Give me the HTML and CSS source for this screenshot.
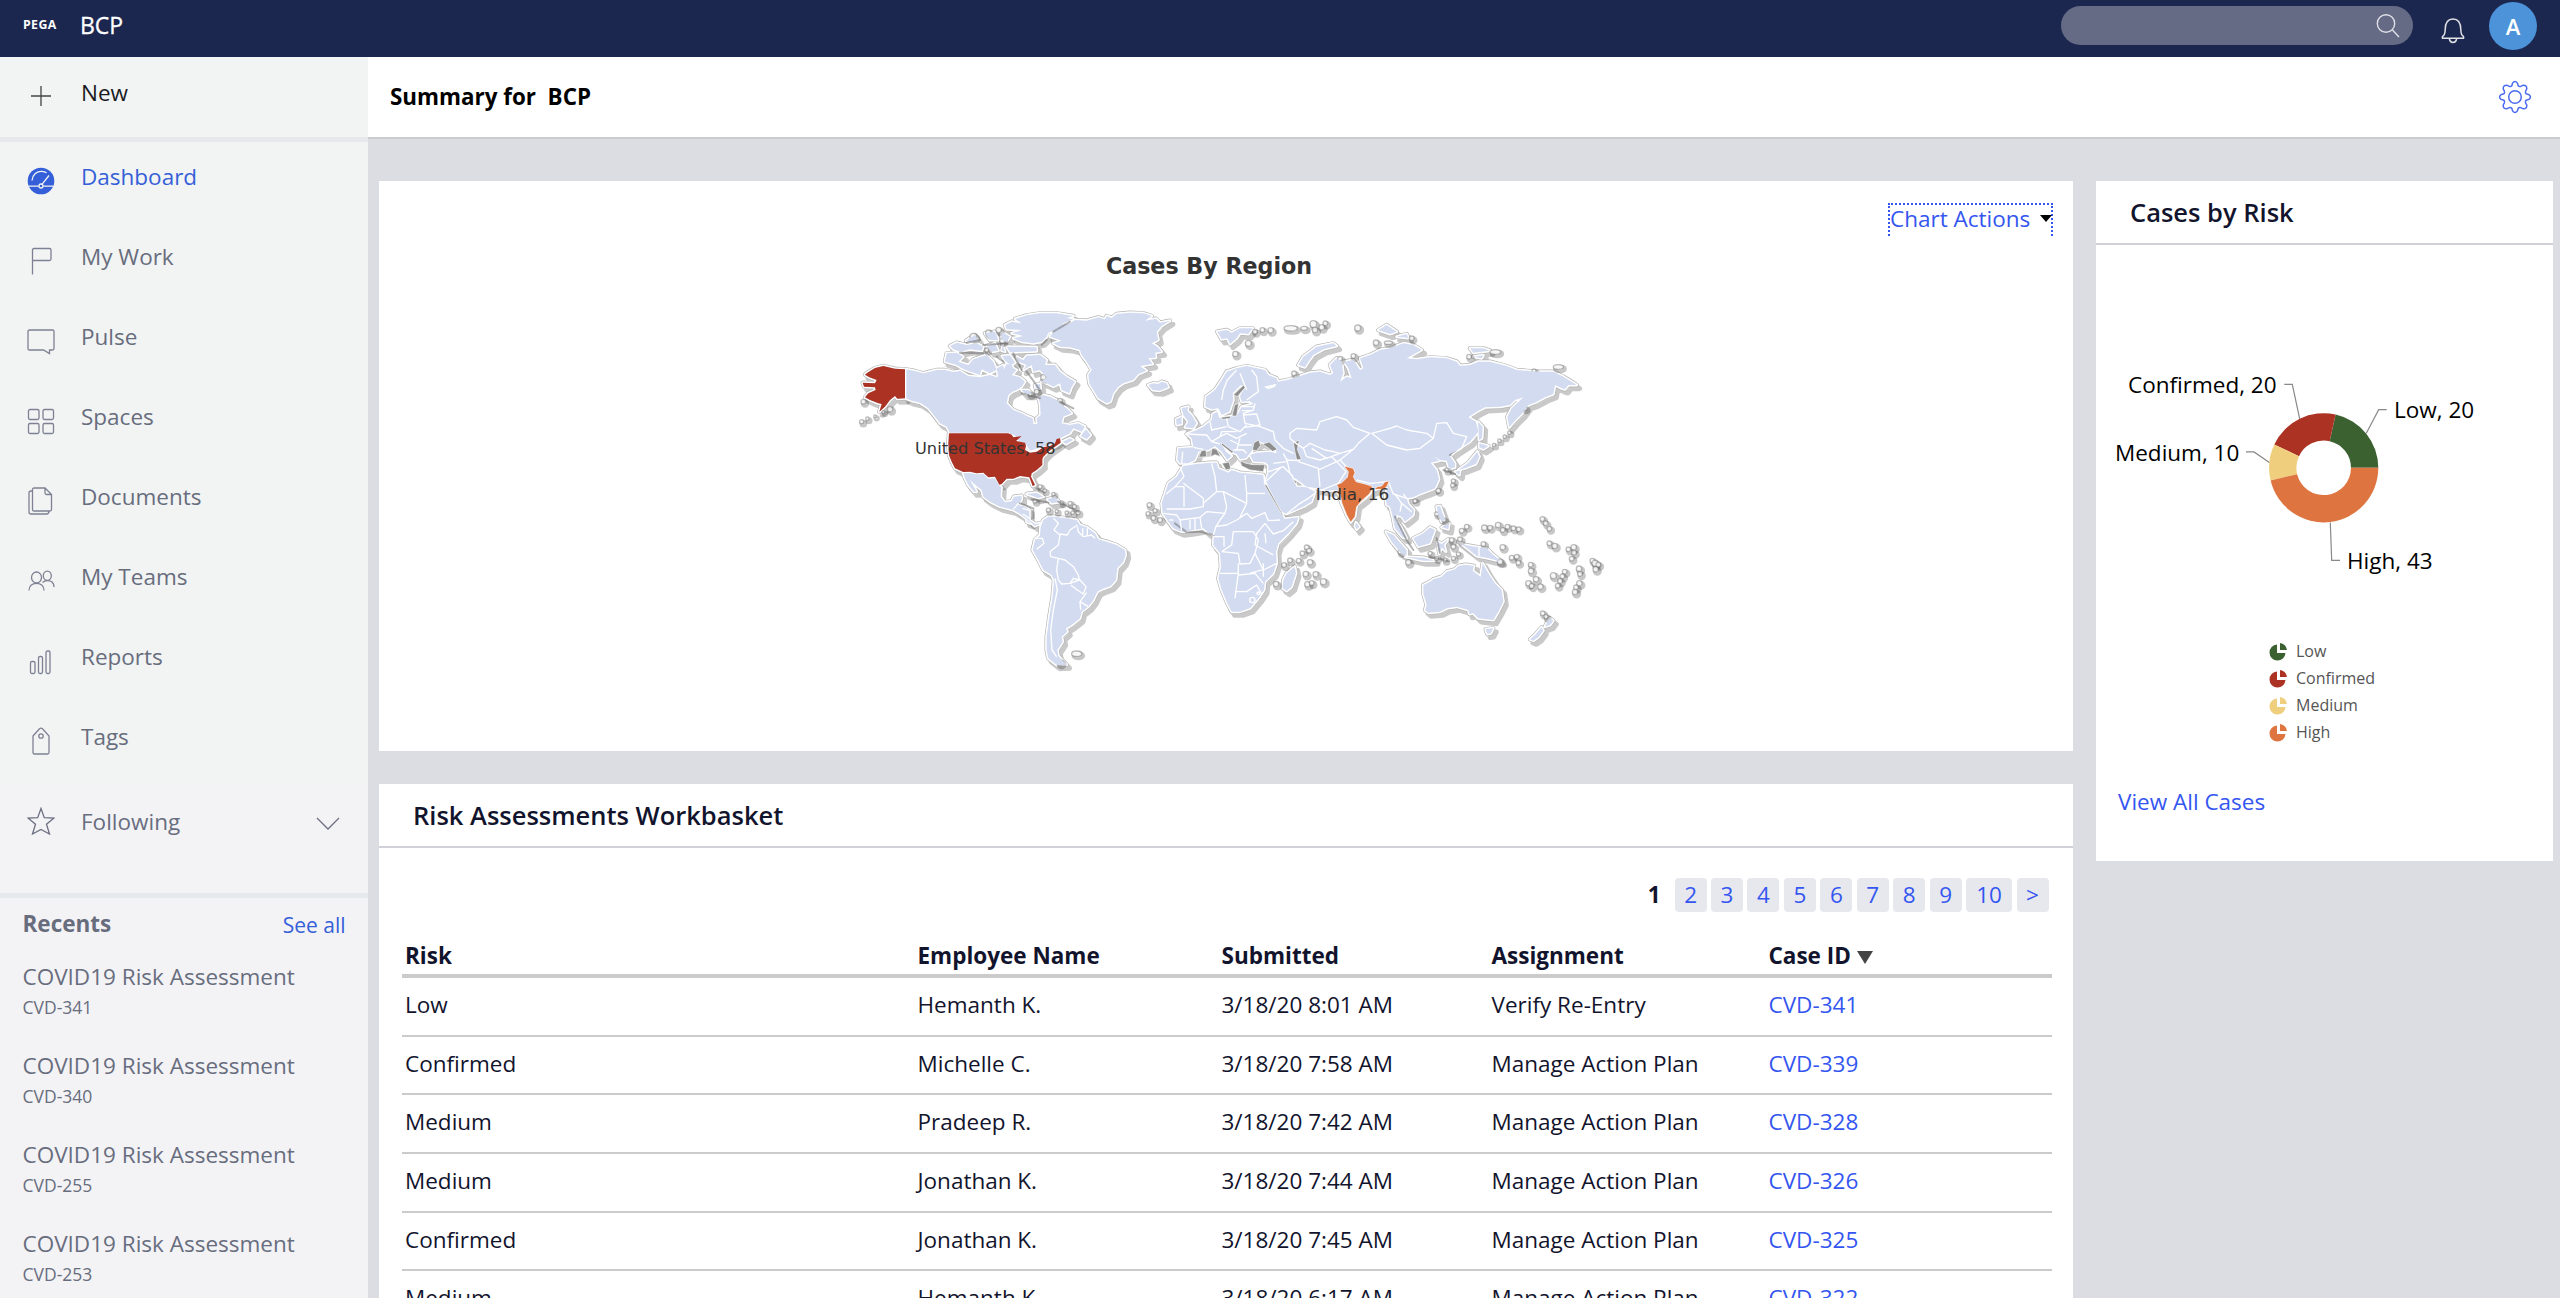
FILE: index.html
```html
<!DOCTYPE html>
<html lang="en">
<head>
<meta charset="utf-8">
<title>BCP</title>
<link rel="stylesheet" href="styles.css">
</head>
<body>
<header class="topbar">
  <span class="logo">PEGA</span>
  <span class="app-name">BCP</span>
  <div class="search">
    <svg width="26" height="28" viewBox="0 0 26 28"><circle cx="10" cy="10.5" r="8.7"/><path d="M16.5 17L23 24"/></svg>
  </div>
  <svg class="bell" width="24" height="28" viewBox="0 0 24 28"><path d="M1.500 21.200Q0.900 19.500 2.500 18.600Q4 17.500 4.200 12.500C4.300 5.500 6.500 2 12 2S19.700 5.500 19.800 12.500Q20 17.500 21.500 18.600Q23.100 19.500 22.500 21.200ZM8.300 21.500Q9 25.400 12 25.400T15.700 21.500"/></svg>
  <span class="avatar">A</span>
</header>
<div class="shell">
  <aside class="sidebar">
    <a class="nav-row new"><svg viewBox="0 0 28 28"><path d="M14 4v20M4 14h20"/></svg>New</a>
    <nav class="nav">
      <a class="nav-row active"><svg viewBox="0 0 28 28"><circle class="disc" cx="14" cy="14" r="13.300"/><path class="lite" d="M5 13.500C5.500 7.500 10 4 15 4.300Q17.500 4.500 19.500 5.800M22 8.500L14.800 17.600M1.500 19.200h10.300M16.200 19.200h10.300"/><circle class="lite" cx="14" cy="19" r="2"/></svg>Dashboard</a>
      <a class="nav-row"><svg viewBox="0 0 28 28"><path d="M5.500 27.500V3Q5.500 1.500 7 1.500H22.500Q24 1.500 24 3V12Q24 13.500 22.500 13.500H5.500"/></svg>My Work</a>
      <a class="nav-row"><svg viewBox="0 0 28 28"><path d="M2.500 3H25.500Q27 3 27 4.500V21.500Q27 23 25.500 23H22.500V26.500L16.500 23H2.500Q1 23 1 21.500V4.500Q1 3 2.500 3Z"/></svg>Pulse</a>
      <a class="nav-row"><svg viewBox="0 0 28 28"><rect x="1.500" y="2.500" width="10.500" height="10" rx="1.500"/><rect x="16" y="2.500" width="10.500" height="10" rx="1.500"/><rect x="1.500" y="16.500" width="10.500" height="10" rx="1.500"/><rect x="16" y="16.500" width="10.500" height="10" rx="1.500"/></svg>Spaces</a>
      <a class="nav-row"><svg viewBox="0 0 28 28"><path d="M5.500 2.500Q5.500 1 7 1H18L24.500 7.500V22.500Q24.500 24 23 24H7Q5.500 24 5.500 22.500ZM18 1V6Q18 7.500 19.500 7.500H24.500M5.500 4H4Q2 4 2 6V25Q2 27 4 27H19.500Q22 27 22 24"/></svg>Documents</a>
      <a class="nav-row"><svg viewBox="0 0 28 28"><ellipse cx="9.500" cy="10.500" rx="5" ry="5.500"/><path d="M2 23.500C2 19 5 16.300 9.500 16.300S17 19 17 23.500"/><ellipse cx="20.300" cy="8.800" rx="4" ry="4.600"/><path d="M15.500 15.500Q17.500 13.600 20.300 13.600C24.500 13.600 27 16 27 20"/></svg>My Teams</a>
      <a class="nav-row"><svg viewBox="0 0 28 28"><rect x="3.500" y="14.500" width="4.500" height="12" rx="1.500"/><rect x="11.500" y="9.500" width="4" height="17" rx="1.500"/><rect x="19" y="4" width="4" height="22.500" rx="1.500"/></svg>Reports</a>
      <a class="nav-row"><svg viewBox="0 0 28 28"><path d="M6 9L12.500 1.800Q14 0.500 15.500 1.800L22 9V25.500Q22 27 20.500 27H7.500Q6 27 6 25.500Z"/><circle cx="14" cy="9" r="2.200"/></svg>Tags</a>
    </nav>
    <a class="nav-row following"><svg viewBox="0 0 28 28"><path d="M14 1.500L17.300 10.700L27 11L19.500 17.200L22.500 27L14 22.500L5.500 27L8.500 17.200L1 11L10.700 10.700Z"/></svg>Following<svg class="chev" viewBox="0 0 28 28"><path d="M3 9L14 20L25 9"/></svg></a>
    <section class="recents">
      <div class="recents-head"><b>Recents</b><a>See all</a></div>
      <div class="recent"><p>COVID19 Risk Assessment</p><small>CVD-341</small></div>
      <div class="recent"><p>COVID19 Risk Assessment</p><small>CVD-340</small></div>
      <div class="recent"><p>COVID19 Risk Assessment</p><small>CVD-255</small></div>
      <div class="recent"><p>COVID19 Risk Assessment</p><small>CVD-253</small></div>
    </section>
  </aside>
  <main class="main">
    <div class="page-head"><h1>Summary for&nbsp; BCP</h1>
      <svg class="gear" width="34" height="34" viewBox="-17 -17 34 34"><path d="M-2.400 -13.900Q0 -17 2.400 -13.900L3.200 -11.200Q4.200 -10 5.800 -10.600L8.200 -11.800Q11.900 -11.900 11.800 -8.200L10.600 -5.800Q10 -4.200 11.200 -3.200L13.900 -2.400Q17 0 13.900 2.400L11.200 3.200Q10 4.200 10.600 5.800L11.800 8.200Q11.900 11.900 8.200 11.800L5.800 10.600Q4.200 10 3.200 11.200L2.400 13.900Q0 17 -2.400 13.900L-3.200 11.200Q-4.200 10 -5.800 10.600L-8.200 11.800Q-11.900 11.900 -11.800 8.200L-10.600 5.800Q-10 4.200 -11.200 3.200L-13.900 2.400Q-17 0 -13.900 -2.400L-11.200 -3.200Q-10 -4.200 -10.600 -5.800L-11.800 -8.200Q-11.900 -11.900 -8.200 -11.800L-5.800 -10.600Q-4.200 -10 -3.200 -11.200Z"/><circle r="6.300"/></svg>
    </div>
    <div class="content">
      <div class="col-main">
        <section class="card map-card">
          <div class="actions"><a>Chart Actions</a><svg width="12" height="8" viewBox="0 0 12 8"><path d="M0 0H12L6 7Z"/></svg></div>
          <h2 class="map-title">Cases By Region</h2>
          <svg class="map" width="780" height="390" viewBox="0 0 2340 1170">
            <defs>
              <g id="land">
                <path id="canada" d="M197 238L225 243L250 250L270 245L290 240L315 240L340 246L360 243L385 258L420 262L450 255L470 262L485 250L490 240L500 222L515 225L520 235L530 240L515 255L540 262L555 275L545 290L530 300L518 305L505 315L500 340L520 360L545 370L560 378L578 385L580 402L592 402L590 385L602 375L600 340L595 325L610 315L630 320L650 330L665 345L680 355L695 370L670 380L665 400L690 405L715 400L735 410L725 425L700 415L690 430L660 445L650 458L630 465L610 470L570 482L560 465L540 458L530 440L515 432L330 430L320 410L300 400L285 380L265 355L240 338L215 332L197 325Z"/>
                <path id="alaska" d="M195 238L165 236L130 228L105 234L82 248L75 254L88 262L110 270L105 280L68 278L72 290L105 292L107 300L85 310L75 322L90 330L115 340L125 342L118 365L135 350L150 330L165 318L172 326L195 325Z"/>
                <path id="usa" d="M327 430L505 430L515 434L520 442L545 438L528 453L555 458L558 468L555 480L570 488L590 485L610 472L630 468L645 460L650 447L660 445L662 458L645 470L625 485L610 500L607 507L607 525L590 540L575 550L573 560L585 585L578 588L568 562L540 558L520 566L500 566L485 582L478 584L465 560L445 562L430 548L410 550L390 545L370 546L345 535L335 515L327 495L325 460Z"/>
                <path d="M370 550L390 549L410 553L430 552L445 566L465 565L478 587L484 592L482 620L495 637L515 634L522 620L545 617L545 628L535 645L555 650L568 660L568 690L585 702L603 700L585 708L570 695L545 675L520 660L480 650L450 635L430 620L425 600L400 580L388 567L410 605L402 605L385 585L375 565Z"/>
                <path d="M610 690L625 680L640 680L680 685L710 690L720 705L740 712L765 730L775 748L800 755L830 765L855 780L857 795L850 815L832 835L828 870L812 888L785 898L772 905L760 930L745 950L725 965L720 985L695 1005L678 1015L682 1025L665 1040L668 1055L652 1080L655 1098L668 1112L680 1124L650 1125L625 1105L620 1080L620 1040L628 980L638 920L642 870L635 855L610 840L595 810L578 780L585 750L600 735L602 710Z"/>
                <path d="M640 125L660 105L690 100L705 90L740 92L775 82L795 88L800 78L815 84L830 72L870 68L910 70L935 78L915 92L948 86L960 98L990 92L965 108L950 125L955 150L935 160L952 170L965 185L945 188L948 203L925 205L938 222L900 228L920 242L895 252L880 270L850 280L835 290L820 310L812 335L800 340L775 325L760 300L748 280L745 255L755 240L740 215L725 195L720 180L690 172L660 170L640 160L665 152L630 140Z"/>
                <path d="M495 105L515 95L545 100L525 87L560 76L600 70L650 70L700 78L680 84L700 88L670 100L650 120L625 128L620 140L605 155L580 160L545 155L520 145L550 138L515 130L545 120L500 118Z"/>
                <path d="M320 190L350 188L370 200L355 215L385 225L400 208L440 195L460 215L470 240L450 250L425 238L420 255L390 245L365 235L350 225L315 215Z"/>
                <path d="M330 168L350 158L380 165L410 160L430 170L425 182L390 178L360 185L340 178ZM378 152L405 135L415 150L395 158ZM435 130L465 125L475 150L450 150ZM440 168L465 160L475 182L455 185ZM485 125L510 140L500 155L484 150ZM500 170L590 172L590 184L510 187ZM488 165L495 185L485 182ZM486 198L510 196L525 218L512 226L495 212ZM470 235L490 225L492 252L474 258Z"/>
                <path d="M530 200L550 210L560 197L600 195L620 210L615 225L645 225L660 245L680 260L705 275L695 290L688 310L665 300L660 280L640 290L620 280L605 275L620 262L600 240L580 245L575 225L550 240L560 225L535 215ZM545 300L565 300L575 312L555 312ZM585 285L600 282L602 295L588 298ZM925 285L940 280L955 282L965 275L980 280L985 292L960 302L938 300ZM722 438L738 418L752 435L740 448ZM668 455L690 445L700 450L678 462Z"/>
                <path d="M560 612L590 608L610 620L595 624ZM622 628L645 622L658 636L635 640ZM525 652L545 658L560 675L545 665ZM560 690L572 700L560 696Z"/>
                <g transform="translate(900 0)">
                  <path d="M130 528L170 522L210 518L230 518L235 535L265 548L275 540L300 548L350 553L370 555L372 580L390 610L405 640L425 668L433 687L475 682L470 700L445 730L415 760L408 785L410 820L400 850L375 875L372 900L355 925L330 955L300 965L275 965L262 940L245 900L235 865L243 830L240 790L220 765L222 735L205 728L190 715L150 722L125 725L100 715L85 695L68 670L65 640L75 610L85 580L110 560Z"/>
                  <path d="M196 350L198 320L225 300L245 270L260 245L290 235L320 228L350 235L375 240L385 255L410 265L415 280L395 285L372 290L385 298L405 290L412 275L430 272L450 268L480 258L510 248L540 245L570 255L580 250L570 225L590 205L605 215L610 250L600 275L620 260L635 265L625 235L612 215L640 210L660 240L670 235L660 205L690 195L720 180L750 175L790 160L820 165L845 180L800 205L830 208L870 202L920 205L950 215L960 228L990 225L1015 215L1050 215L1100 228L1130 240L1190 245L1240 245L1270 260L1295 275L1310 285L1285 285L1275 298L1265 295L1245 285L1240 312L1215 322L1185 338L1165 345L1145 372L1122 395L1108 412L1102 380L1115 355L1150 322L1125 330L1110 345L1080 350L1035 352L1010 365L985 382L1008 395L1015 425L990 455L955 478L940 488L930 498L945 520L945 532L928 538L920 512L900 510L880 498L898 512L872 518L890 540L897 568L885 595L860 605L840 612L820 622L800 625L805 642L822 660L820 675L795 695L785 680L770 675L768 690L782 710L800 745L788 742L765 715L758 680L750 650L740 645L735 615L745 590L720 595L695 602L690 610L675 625L650 645L645 680L632 697L620 675L605 640L595 610L590 600L560 602L530 595L500 590L470 568L455 560L470 590L500 592L525 605L515 635L490 650L440 672L425 665L405 630L385 590L378 570L385 550L385 525L375 517L340 515L330 495L350 488L390 485L410 490L405 470L360 455L342 475L330 490L318 505L300 508L290 492L270 485L245 462L258 485L275 498L262 510L245 485L225 468L205 480L175 485L165 510L145 520L120 520L112 510L115 475L160 472L155 445L140 432L170 420L190 410L215 390L218 372L232 365L238 385L275 378L295 370L305 350L340 342L330 334L305 335L300 318L315 290L302 286L278 310L280 330L268 365L245 375L235 355L215 358Z"/>
                  <path d="M125 355L145 350L142 362L155 375L170 400L160 415L135 412L145 395L130 375ZM108 388L125 380L125 402L110 405ZM475 225L490 200L530 170L580 160L590 168L550 178L520 195L505 215L495 232ZM232 125L260 120L275 128L300 115L338 115L325 132L300 130L290 145L270 162L262 145L245 148ZM715 120L740 105L770 125L750 132ZM770 140L800 132L805 144ZM990 175L1030 175L1050 182L1000 188ZM1000 200L1030 196L1025 205Z"/>
                  <path d="M1012 485L1018 500L1008 522L975 535L955 540L985 518ZM1018 460L1045 468L1030 478L1018 472ZM1014 395L1028 410L1026 445L1017 450ZM945 545L960 542L958 555ZM890 650L900 648L915 690L905 695L895 675ZM905 712L928 700L925 718ZM738 725L760 735L800 780L800 795L785 792L755 755ZM795 800L850 803L885 812L850 812ZM820 745L850 730L870 712L885 720L870 760L835 770ZM893 755L905 762L925 748L912 765L918 785L905 772L898 792ZM955 755L975 765L1005 770L1040 775L1060 795L1085 815L1045 805L1010 798L985 778ZM648 697L658 710L650 718L645 708Z"/>
                  <path d="M850 885L870 875L880 868L905 860L920 845L945 838L955 828L978 824L1002 828L998 842L1022 860L1028 820L1045 850L1065 880L1085 900L1090 935L1075 965L1060 990L1038 988L1015 985L1000 970L988 972L985 960L950 950L920 955L900 965L865 968L855 960L860 945L850 910ZM1037 1018L1060 1015L1052 1030L1042 1032ZM464 830L468 850L455 890L440 903L428 895L430 870L440 850Z"/>
                </g>
                <path d="M2122 995L2130 985L2140 992L2130 1005L2115 1010ZM2070 1048L2085 1035L2105 1012L2110 1022L2095 1042L2080 1052Z"/>
              </g>
              <g id="islets">
                <circle cx="65" cy="395" r="6"/><circle cx="82" cy="386" r="5"/><circle cx="105" cy="379" r="4"/><circle cx="130" cy="366" r="4"/><circle cx="150" cy="358" r="8"/><circle cx="70" cy="335" r="7"/>
                <circle cx="928" cy="645" r="7"/><circle cx="945" cy="662" r="6"/><circle cx="924" cy="671" r="6"/><circle cx="940" cy="684" r="7"/><circle cx="960" cy="690" r="7"/>
                <circle cx="600" cy="590" r="6"/><circle cx="614" cy="602" r="5"/><circle cx="585" cy="633" r="6"/><circle cx="665" cy="638" r="5"/><circle cx="690" cy="640" r="6"/><circle cx="703" cy="650" r="6"/><circle cx="714" cy="668" r="6"/><circle cx="625" cy="660" r="6"/><circle cx="650" cy="664" r="5"/><circle cx="680" cy="668" r="5"/><circle cx="698" cy="668" r="5"/><circle cx="640" cy="612" r="5"/>
                <circle cx="400" cy="140" r="10"/><circle cx="445" cy="128" r="8"/><circle cx="476" cy="120" r="8"/><circle cx="487" cy="152" r="8"/><circle cx="440" cy="180" r="6"/><circle cx="610" cy="262" r="8"/><circle cx="590" cy="305" r="7"/><circle cx="570" cy="312" r="6"/><circle cx="660" cy="332" r="7"/><ellipse cx="710" cy="1091" rx="15" ry="8"/><circle cx="660" cy="1118" r="9"/>
                <g transform="translate(900 0)">
                  <circle cx="286" cy="192" r="8"/><circle cx="325" cy="160" r="9"/><circle cx="345" cy="125" r="7"/><circle cx="367" cy="120" r="7"/><circle cx="392" cy="121" r="8"/>
                  <ellipse cx="452" cy="115" rx="20" ry="8"/><ellipse cx="492" cy="115" rx="10" ry="6"/><circle cx="520" cy="102" r="10"/><circle cx="525" cy="120" r="8"/><circle cx="545" cy="112" r="8"/><circle cx="556" cy="100" r="7"/><circle cx="653" cy="114" r="9"/><circle cx="708" cy="158" r="8"/><ellipse cx="745" cy="158" rx="12" ry="5"/><circle cx="815" cy="145" r="7"/><ellipse cx="1066" cy="186" rx="16" ry="7"/><circle cx="987" cy="200" r="7"/><ellipse cx="1255" cy="231" rx="15" ry="7"/>
                  <circle cx="600" cy="206" r="7"/><circle cx="640" cy="198" r="7"/><circle cx="462" cy="250" r="7"/>
                  <circle cx="432" cy="825" r="7"/><circle cx="450" cy="811" r="7"/><circle cx="476" cy="812" r="7"/><circle cx="487" cy="790" r="7"/><circle cx="500" cy="772" r="7"/><circle cx="507" cy="782" r="7"/><circle cx="510" cy="817" r="8"/><circle cx="497" cy="852" r="8"/><circle cx="527" cy="853" r="8"/><circle cx="502" cy="883" r="8"/><circle cx="515" cy="879" r="7"/><circle cx="550" cy="875" r="9"/><circle cx="408" cy="882" r="8"/>
                  <circle cx="895" cy="602" r="7"/><circle cx="825" cy="633" r="6"/><circle cx="805" cy="817" r="8"/><circle cx="780" cy="786" r="6"/><circle cx="940" cy="573" r="6"/><circle cx="938" cy="586" r="6"/><circle cx="920" cy="540" r="6"/><circle cx="965" cy="722" r="7"/><circle cx="980" cy="710" r="7"/><circle cx="890" cy="672" r="6"/><circle cx="912" cy="690" r="6"/>
                  <circle cx="870" cy="790" r="6"/><circle cx="890" cy="805" r="6"/><circle cx="915" cy="810" r="6"/><circle cx="940" cy="805" r="6"/><circle cx="955" cy="792" r="6"/><circle cx="935" cy="750" r="7"/><circle cx="960" cy="748" r="7"/><circle cx="940" cy="770" r="7"/>
                  <circle cx="1033" cy="713" r="8"/><circle cx="1050" cy="713" r="7"/><circle cx="1074" cy="705" r="8"/><circle cx="1088" cy="720" r="7"/><circle cx="1102" cy="710" r="7"/><circle cx="1120" cy="715" r="7"/><circle cx="1136" cy="718" r="7"/>
                  <circle cx="1030" cy="762" r="7"/><circle cx="1088" cy="772" r="8"/><circle cx="1080" cy="815" r="8"/><circle cx="1115" cy="803" r="7"/><circle cx="1130" cy="800" r="7"/><circle cx="1135" cy="818" r="7"/>
                  <circle cx="1062" cy="465" r="5"/><circle cx="1078" cy="452" r="5"/><circle cx="1094" cy="440" r="5"/><circle cx="1108" cy="428" r="5"/><circle cx="1155" cy="355" r="6"/><circle cx="1182" cy="243" r="6"/>
                </g>
                <g transform="translate(1860 0)">
                  <circle cx="247" cy="687" r="7"/><circle cx="257" cy="700" r="7"/><circle cx="268" cy="716" r="7"/><circle cx="268" cy="760" r="7"/><circle cx="284" cy="768" r="8"/><circle cx="325" cy="778" r="7"/><circle cx="341" cy="772" r="8"/><circle cx="342" cy="788" r="7"/><circle cx="335" cy="806" r="7"/>
                  <circle cx="212" cy="824" r="7"/><circle cx="213" cy="843" r="8"/><circle cx="228" cy="868" r="8"/><circle cx="205" cy="880" r="8"/><circle cx="215" cy="888" r="7"/><circle cx="241" cy="890" r="8"/><circle cx="280" cy="857" r="9"/><circle cx="314" cy="845" r="7"/><circle cx="307" cy="859" r="7"/><circle cx="300" cy="873" r="7"/><circle cx="293" cy="887" r="7"/>
                  <circle cx="357" cy="836" r="8"/><circle cx="360" cy="852" r="7"/><circle cx="358" cy="880" r="8"/><circle cx="348" cy="892" r="7"/><circle cx="345" cy="906" r="8"/><circle cx="397" cy="812" r="7"/><circle cx="405" cy="820" r="9"/><circle cx="415" cy="824" r="7"/><circle cx="407" cy="838" r="8"/><circle cx="248" cy="970" r="7"/><circle cx="258" cy="980" r="6"/>
                </g>
              </g>
            </defs>
            <g class="cast" transform="translate(9 11)"><use href="#land"/></g>
            <use class="rim" href="#land"/>
            <use class="halo" href="#land"/>
            <use class="islet-cast" href="#islets" transform="translate(5 6)"/>
            <use class="islet" href="#islets"/>
            <use class="fill" href="#land"/>
            <g class="seas" transform="translate(900 0)">
              <path d="M342 458L356 450L362 466L350 482L337 480ZM368 462L388 456L412 478L398 484ZM460 458L478 450L472 478L484 508L470 510L464 482ZM245 458L280 485L276 490L244 464ZM456 565L470 575L468 582ZM176 502L184 482L198 480L200 500ZM212 500L216 475L230 478L242 500L225 494ZM246 520L268 516L272 536L258 540ZM300 512L318 520L340 524L375 524L370 545L330 540L305 528ZM372 582L380 585L432 680L424 672ZM284 345L296 340L290 378L276 378ZM280 315L310 286L316 292L292 320ZM244 382L272 378L270 386L246 388Z"/>
            </g>
            <path class="straits" d="M380 158L420 150M430 165L500 160M360 188L430 190M470 200L490 215M520 190L545 240M560 245L600 300M545 310L600 325M660 335L700 355M620 150L605 165M640 125L690 95M1005 700L1040 727L1080 725L1120 735M590 595L615 610M575 628L625 638M655 635L715 665M540 640L580 655L580 685M1665 680L1700 750L1720 780M1770 800L1830 815M1790 745L1800 790M1830 495L1850 485M1810 540L1845 552"/>
            <g class="borders">
              <path d="M197 238V325M327 430H510M600 735L585 745L607 745L612 760L590 778M640 685L655 700L642 720L660 735L655 765L630 785L632 800L655 805L675 810L700 830L715 855L718 870L690 880L665 882L655 870L650 840L655 805M660 732L682 735L690 720L712 705M712 710L715 725L730 740L755 735L765 745M728 715V738M742 715V735M645 865L652 900L640 960L632 1020L636 1080L650 1100M690 880L700 865L720 870L738 890L730 912L712 900L692 885M740 908L720 935L745 950M720 935L722 960"/>
              <path d="M535 640L520 658M548 655L570 662M548 672L568 685"/>
              <g transform="translate(900 0)">
                <path d="M120 530L132 560L105 590L78 612M130 580L190 625V650L150 657H80M105 590H132V650M190 640L230 605L225 560L215 520M230 605H250L320 640M315 555L320 610H375M320 610V640L300 682M250 605L260 650L255 670L200 665L180 682L185 715M255 670L240 690L228 710L220 735M225 710L260 705L290 690L320 670L335 685L375 668L385 692L420 690M280 725H340L355 750L345 790L330 820L300 822L295 790L245 785M280 725L275 765L245 785M222 740H252V770M345 765L350 730L375 700L400 732L430 722L460 695M375 730L378 760M345 765L400 795M295 820V850H240M295 850L285 925M285 905L320 905L350 885L365 912M295 855L345 850L370 880M345 790L370 840L410 820M370 820V860M330 850L370 838M150 690V718M165 685V720M120 690L125 722M70 670L110 675L120 690L180 682M88 690L100 690"/>
                <path d="M450 430L470 415L530 420L540 395L590 380L620 390L640 412L690 430L655 460L640 478L600 490L580 485L555 480L510 460L490 475L465 458L450 445ZM695 430L750 415L770 408L800 420L860 430L880 445L840 475L800 480L740 465ZM880 445L890 400L920 398L940 430L980 440L965 475L935 495M640 478L600 510L620 530M650 570L690 580L745 575L760 612L800 625M490 475L500 500L540 510L575 500L590 515L600 510M440 505L450 550L458 560M475 515L535 535L540 590M535 540L590 515L618 545L595 580L545 600M515 475L560 505L600 490M385 545L430 530L460 560M380 572L425 530M440 672L480 640L505 625L525 610M430 490L440 510L480 512M400 520L440 515"/>
                <path d="M765 612L785 640L780 665M785 640L815 665M800 625L790 612M335 240L350 260L355 305L320 330M290 240L262 270L250 300L245 330M300 250L320 300M345 340L340 360L310 370L315 400L360 410L400 425L405 450L430 475L460 490M310 375L350 372L360 405L315 412M260 385L265 410L300 425L320 405M210 395L215 420L260 410M140 432L200 435L215 455L240 440L260 430L290 445L320 430M160 472L190 478M240 440L245 425L290 425M270 450L300 465L335 465M280 480L310 480L320 490M215 455L240 462M300 445L290 480M128 485L125 520M305 350L345 350M305 362L338 362M1017 770V798"/>
                <circle cx="337" cy="930" r="8"/><circle cx="355" cy="910" r="4"/>
              </g>
            </g>
            <use class="us" href="#alaska"/><use class="us" href="#usa"/>
            <path class="india" d="M1512 528L1528 532L1540 535L1545 548L1540 560L1548 575L1575 582L1595 588L1600 600L1612 590L1625 588L1635 575L1648 573L1640 590L1632 598L1610 598L1595 600L1588 612L1565 632L1550 650L1545 680L1532 697L1520 675L1506 640L1500 612L1488 610L1498 600L1490 584L1505 578L1522 562L1525 545Z"/>
            <g class="map-label"><text x="225" y="492" textLength="422" lengthAdjust="spacingAndGlyphs">United States, 58</text><text x="1427" y="630" textLength="221" lengthAdjust="spacingAndGlyphs">India, 16</text></g>
          </svg>
        </section>
        <section class="card">
          <h2 class="card-head">Risk Assessments Workbasket</h2>
          <div class="pager"><b>1</b><a>2</a><a>3</a><a>4</a><a>5</a><a>6</a><a>7</a><a>8</a><a>9</a><a class="wide">10</a><a>&gt;</a></div>
          <div class="grid">
            <div class="row head"><span>Risk</span><span>Employee Name</span><span>Submitted</span><span>Assignment</span><span>Case ID<svg width="16" height="13" viewBox="0 0 16 13"><path d="M0 0H16L8 13Z"/></svg></span></div>
            <div class="row"><span>Low</span><span>Hemanth K.</span><span>3/18/20 8:01 AM</span><span>Verify Re-Entry</span><a>CVD-341</a></div>
            <div class="row"><span>Confirmed</span><span>Michelle C.</span><span>3/18/20 7:58 AM</span><span>Manage Action Plan</span><a>CVD-339</a></div>
            <div class="row"><span>Medium</span><span>Pradeep R.</span><span>3/18/20 7:42 AM</span><span>Manage Action Plan</span><a>CVD-328</a></div>
            <div class="row"><span>Medium</span><span>Jonathan K.</span><span>3/18/20 7:44 AM</span><span>Manage Action Plan</span><a>CVD-326</a></div>
            <div class="row"><span>Confirmed</span><span>Jonathan K.</span><span>3/18/20 7:45 AM</span><span>Manage Action Plan</span><a>CVD-325</a></div>
            <div class="row"><span>Medium</span><span>Hemanth K.</span><span>3/18/20 6:17 AM</span><span>Manage Action Plan</span><a>CVD-322</a></div>
          </div>
        </section>
      </div>
      <section class="card risk-card">
        <h2 class="card-head">Cases by Risk</h2>
        <svg class="donut" width="457" height="374" viewBox="2096 245 457 374">
          <g transform="translate(2323.700 467.800)">
            <path fill="#3b6131" d="M54.600 0A54.600 54.600 0 0 0 11.910 -53.290L5.960 -26.640A27.300 27.300 0 0 1 27.300 0Z"/>
            <path fill="#ac3324" d="M11.910 -53.290A54.600 54.600 0 0 0 -49.400 -23.250L-24.700 -11.620A27.300 27.300 0 0 1 5.960 -26.640Z"/>
            <path fill="#efce7e" d="M-49.400 -23.250A54.600 54.600 0 0 0 -53.090 12.750L-26.550 6.370A27.300 27.300 0 0 1 -24.700 -11.620Z"/>
            <path fill="#de7540" d="M-53.090 12.750A54.600 54.600 0 0 0 54.600 0H27.300A27.300 27.300 0 0 1 -26.550 6.370Z"/>
          </g>
          <path class="leader" d="M2386.700 409.700H2378.700L2366.300 433.300M2284.300 384.300H2292.300L2299.700 418.800M2246 451.900H2254L2269.300 462.400M2330.300 522.500L2331.700 560.400H2340"/>
          <text x="2128" y="392.500">Confirmed, 20</text><text x="2394" y="418.400">Low, 20</text><text x="2115" y="461">Medium, 10</text><text x="2347" y="568.500">High, 43</text>
        </svg>
        <ul class="legend">
          <li class="low"><svg viewBox="0 0 18 18"><path d="M8 1.500A8 8 0 1 0 16.500 10H8ZM11 0A7.500 7.500 0 0 1 18 7H11Z"/></svg>Low</li>
          <li class="confirmed"><svg viewBox="0 0 18 18"><path d="M8 1.500A8 8 0 1 0 16.500 10H8ZM11 0A7.500 7.500 0 0 1 18 7H11Z"/></svg>Confirmed</li>
          <li class="medium"><svg viewBox="0 0 18 18"><path d="M8 1.500A8 8 0 1 0 16.500 10H8ZM11 0A7.500 7.500 0 0 1 18 7H11Z"/></svg>Medium</li>
          <li class="high"><svg viewBox="0 0 18 18"><path d="M8 1.500A8 8 0 1 0 16.500 10H8ZM11 0A7.500 7.500 0 0 1 18 7H11Z"/></svg>High</li>
        </ul>
        <a class="view-all">View All Cases</a>
      </section>
    </div>
  </main>
</div>
</body>
</html>
```
FILE: styles.css
```css
* { box-sizing: border-box; margin: 0; padding: 0; }
body { width: 2560px; height: 1298px; overflow: hidden; font: 22.5px/36px "Open Sans", "Noto Sans", sans-serif; color: #12142d; background: #dbdde2; }
svg { flex: none; fill: none; }

.topbar { height: 57px; padding: 0 23px 7px; display: flex; align-items: center; background: #1c274f; color: #fff; }
.logo { width: 57px; font-size: 12.3px; font-weight: 700; letter-spacing: .4px; }
.app-name { font-weight: 400; font-size: 23px; -webkit-text-stroke: .3px #fff; padding-bottom: 1px; }
.search { margin-left: auto; width: 352.500px; height: 39px; border-radius: 20px; background: #656a85; display: flex; align-items: center; justify-content: flex-end; padding: 3px 11px 0 0; stroke: #e0e1e7; stroke-width: 1.400; }
.bell { margin: 11px 24px 0 28px; stroke: #e0e1e7; stroke-width: 1.500; }
.avatar { width: 48px; height: 48px; margin-top: 2px; border-radius: 50%; background: #4c93d9; text-align: center; line-height: 48px; font-size: 22px; font-weight: 600; }

.shell { display: flex; height: 1241px; }
.sidebar { width: 368px; flex: none; background: #f3f3f6; color: #686d7e; overflow: hidden; }
.nav { background: #f2f4f3; height: 641px; }
.nav-row { height: 80px; padding: 0 26px 10px 27px; display: flex; align-items: center; gap: 26px; }
.nav-row svg { width: 28px; height: 28px; margin-top: 8px; stroke: #7d8193; stroke-width: 1.300; }
.nav-row.new { height: 85px; padding-bottom: 8px; background: #f2f4f3; border-bottom: 5px solid #e7e8ec; color: #1a1a1f; }
.nav-row.new svg { margin-top: 5px; stroke: #444; }
.nav-row.active { color: #355fd8; }
.nav-row.active svg { stroke: none; }
.disc { fill: #355fd8; }
.lite { stroke: #f2f4f3; fill: #355fd8; stroke-width: 1.300; }
path.lite { fill: none; }
.nav-row.following { height: 115px; padding-bottom: 32px; border-bottom: 5px solid #e5e9ec; }
.nav-row.following svg { margin-top: -2px; stroke: #6b6f80; }
.nav-row.following .chev { margin: 2px 0 0 auto; }
.recents { padding: 0 22.500px; }
.recents-head { height: 60px; display: flex; justify-content: space-between; padding-top: 8px; }
.recents-head a { font-size: 21px; color: #355fd8; padding-top: 1px; }
.recent { height: 89px; padding-top: 1px; }
.recent small { display: block; font-size: 17.500px; line-height: 24.600px; }

.main { flex: 1; }
.page-head { height: 82px; padding: 0 28px 1px 22px; display: flex; align-items: center; justify-content: space-between; background: #fff; border-bottom: 2px solid #cacbce; }
.page-head h1 { font-size: 22.400px; font-weight: 700; color: #000; }
.gear { stroke: #4a6bf0; stroke-width: 1.500; margin-top: 1px; }
.content { display: flex; align-items: flex-start; gap: 23px; padding: 42px 7px 0 11px; }
.col-main { width: 1694px; display: flex; flex-direction: column; gap: 33.500px; }
.card { background: #fff; }
.card a { color: #3456f0; }
.card-head { height: 64px; padding: 0 34px; line-height: 63px; font-size: 25.500px; font-weight: 600; letter-spacing: 0; border-bottom: 2px solid #d0d1d8; }

.map-card { height: 569.500px; position: relative; }
.actions { position: absolute; top: 22px; right: 20px; width: 165px; height: 33px; padding: 0 0 3px; display: flex; align-items: center; justify-content: space-between; border: 2px dotted #3456f0; border-bottom: 0; line-height: 32px; }
.actions svg { fill: #000; margin: 0 -1px 0 0; }
.map-title { padding: 67px 34px 0 0; text-align: center; font: 700 22.200px/36px "DejaVu Sans", Verdana, sans-serif; color: #333; }
.map { display: block; margin: 6px 0 0 461px; stroke-linejoin: round; }
.cast { stroke: rgba(0, 0, 0, .21); stroke-width: 15; }
.rim { stroke: #b4b4b4; stroke-width: 13; }
.halo { stroke: #fff; stroke-width: 9; fill: #fff; }
.islet-cast { stroke: rgba(0, 0, 0, .22); stroke-width: 11; }
.islet { stroke: rgba(110, 110, 110, .45); stroke-width: 4; fill: rgba(255, 255, 255, .85); }
.fill { fill: #d3dbf0; }
.seas { fill: #8d8d8d; stroke: #fff; stroke-width: 2; }
.straits { stroke: rgba(90, 90, 90, .45); stroke-width: 6; stroke-dasharray: 14 5 8 4; stroke-linecap: round; }
.borders { stroke: #fff; stroke-width: 4; }
.us { fill: #ac3324; }
.india { fill: #de7540; stroke: #fff; stroke-width: 2; }
.map-label { font: 46px "DejaVu Sans", Verdana, sans-serif; fill: #333; }

.pager { height: 79px; padding: 30px 24.500px 0; display: flex; justify-content: flex-end; gap: 4.450px; line-height: 34px; }
.pager b, .pager a { width: 32px; height: 34px; border-radius: 4px; text-align: center; }
.pager a { background: #e7e8ee; }
.pager .wide { width: 46px; }
.grid { margin: 0 21px 0 23px; }
.row { height: 58.700px; padding-left: 3px; display: grid; grid-template-columns: 512.500px 304px 270px 277px 1fr; border-bottom: 2px solid #cbcbcb; line-height: 54px; }
.row.head { height: 51px; line-height: 57px; font-weight: 700; border-bottom-width: 4px; }
.row.head svg { fill: #444; margin-left: 6px; }

.risk-card { width: 457px; height: 680px; }
.donut { display: block; }
.donut text { font-size: 22.500px; fill: #000; }
.leader { stroke: #888; stroke-width: 1.200; }
.legend { list-style: none; padding: 19px 0 0 173px; font-size: 16px; line-height: 27.100px; color: #555; }
.legend li { display: flex; align-items: center; gap: 9px; height: 27.100px; }
.legend svg { width: 18px; height: 18px; }
.low svg { fill: #3b6131; } .confirmed svg { fill: #ac3324; } .medium svg { fill: #efce7e; } .high svg { fill: #de7540; }
.view-all { display: block; padding: 38px 0 0 22px; }
```
